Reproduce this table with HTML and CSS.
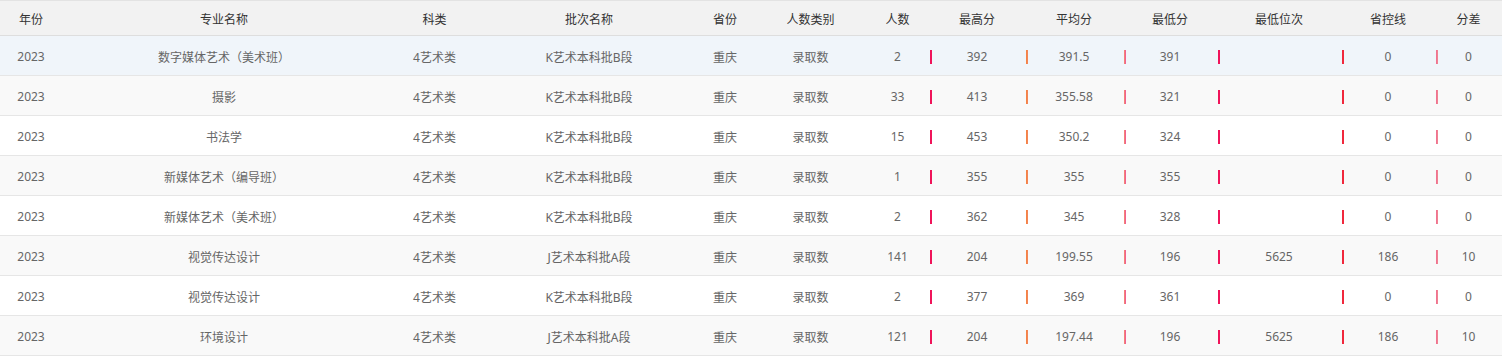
FILE: index.html
```html
<!DOCTYPE html>
<html lang="zh-CN">
<head>
<meta charset="utf-8">
<title>录取分数</title>
<link rel="stylesheet" href="styles.css">
</head>
<body>
<table class="score-table">
  <colgroup>
    <col class="c-year"><col class="c-major"><col class="c-type"><col class="c-batch"><col class="c-prov"><col class="c-kind">
    <col class="c-num"><col class="c-max"><col class="c-avg"><col class="c-min"><col class="c-rank"><col class="c-line"><col class="c-diff">
  </colgroup>
  <thead>
    <tr><th>年份</th><th>专业名称</th><th>科类</th><th>批次名称</th><th>省份</th><th>人数类别</th><th>人数</th><th>最高分</th><th>平均分</th><th>最低分</th><th>最低位次</th><th>省控线</th><th>分差</th></tr>
  </thead>
  <tbody>
    <tr class="hover"><td>2023</td><td>数字媒体艺术（美术班）</td><td>4艺术类</td><td>K艺术本科批B段</td><td>重庆</td><td>录取数</td><td>2</td><td class="b-max">392</td><td class="b-avg">391.5</td><td class="b-min">391</td><td class="b-rank"></td><td class="b-line">0</td><td class="b-diff">0</td></tr>
    <tr><td>2023</td><td>摄影</td><td>4艺术类</td><td>K艺术本科批B段</td><td>重庆</td><td>录取数</td><td>33</td><td class="b-max">413</td><td class="b-avg">355.58</td><td class="b-min">321</td><td class="b-rank"></td><td class="b-line">0</td><td class="b-diff">0</td></tr>
    <tr><td>2023</td><td>书法学</td><td>4艺术类</td><td>K艺术本科批B段</td><td>重庆</td><td>录取数</td><td>15</td><td class="b-max">453</td><td class="b-avg">350.2</td><td class="b-min">324</td><td class="b-rank"></td><td class="b-line">0</td><td class="b-diff">0</td></tr>
    <tr><td>2023</td><td>新媒体艺术（编导班）</td><td>4艺术类</td><td>K艺术本科批B段</td><td>重庆</td><td>录取数</td><td>1</td><td class="b-max">355</td><td class="b-avg">355</td><td class="b-min">355</td><td class="b-rank"></td><td class="b-line">0</td><td class="b-diff">0</td></tr>
    <tr><td>2023</td><td>新媒体艺术（美术班）</td><td>4艺术类</td><td>K艺术本科批B段</td><td>重庆</td><td>录取数</td><td>2</td><td class="b-max">362</td><td class="b-avg">345</td><td class="b-min">328</td><td class="b-rank"></td><td class="b-line">0</td><td class="b-diff">0</td></tr>
    <tr><td>2023</td><td>视觉传达设计</td><td>4艺术类</td><td>J艺术本科批A段</td><td>重庆</td><td>录取数</td><td>141</td><td class="b-max">204</td><td class="b-avg">199.55</td><td class="b-min">196</td><td class="b-rank">5625</td><td class="b-line">186</td><td class="b-diff">10</td></tr>
    <tr><td>2023</td><td>视觉传达设计</td><td>4艺术类</td><td>K艺术本科批B段</td><td>重庆</td><td>录取数</td><td>2</td><td class="b-max">377</td><td class="b-avg">369</td><td class="b-min">361</td><td class="b-rank"></td><td class="b-line">0</td><td class="b-diff">0</td></tr>
    <tr><td>2023</td><td>环境设计</td><td>4艺术类</td><td>J艺术本科批A段</td><td>重庆</td><td>录取数</td><td>121</td><td class="b-max">204</td><td class="b-avg">197.44</td><td class="b-min">196</td><td class="b-rank">5625</td><td class="b-line">186</td><td class="b-diff">10</td></tr>
  </tbody>
</table>
</body>
</html>
```

FILE: styles.css
```css
html, body {
  margin: 0;
  padding: 0;
  background: #ffffff;
}

.score-table {
  width: 1502px;
  table-layout: fixed;
  border-collapse: collapse;
  font-family: "Noto Sans", "Noto Sans CJK SC", sans-serif;
  font-size: 12px;
  color: #666666;
  border-top: 1px solid #e3e3e3;
}

.c-year { width: 62px; }
.c-major { width: 324px; }
.c-type { width: 97px; }
.c-batch { width: 212px; }
.c-prov { width: 60px; }
.c-kind { width: 111px; }
.c-num { width: 63px; }
.c-max { width: 96px; }
.c-avg { width: 98px; }
.c-min { width: 94px; }
.c-rank { width: 124px; }
.c-line { width: 94px; }
.c-diff { width: 67px; }

.score-table th {
  height: 33px;
  padding: 1px 0 0;
  background: #f2f2f2;
  color: #333333;
  font-weight: normal;
  text-align: center;
  border-bottom: 1px solid #dedede;
}

.score-table td {
  height: 37px;
  padding: 2px 0 0;
  text-align: center;
  border-bottom: 1px solid #e6e6e6;
  white-space: nowrap;
}

.score-table tbody tr:nth-child(even) {
  background: #f9f9f9;
}

.score-table tbody tr.hover {
  background: #f0f5fa;
}

.b-max, .b-avg, .b-min, .b-rank, .b-line, .b-diff {
  background-repeat: no-repeat;
  background-position: 1px 14px;
  background-size: 2px 14px;
}

.b-max { background-image: linear-gradient(to right, #f0145a, #f0145a); }
.b-avg { background-image: linear-gradient(to right, #f7823c, #f08660); }
.b-min { background-image: linear-gradient(to right, #f3936b, #f0509a); }
.b-rank { background-image: linear-gradient(to right, #f0145a, #f0145a); }
.b-line { background-image: linear-gradient(to right, #f0283c, #f0283c); }
.b-diff { background-image: linear-gradient(to right, #f06a92, #f08a90); }
```
